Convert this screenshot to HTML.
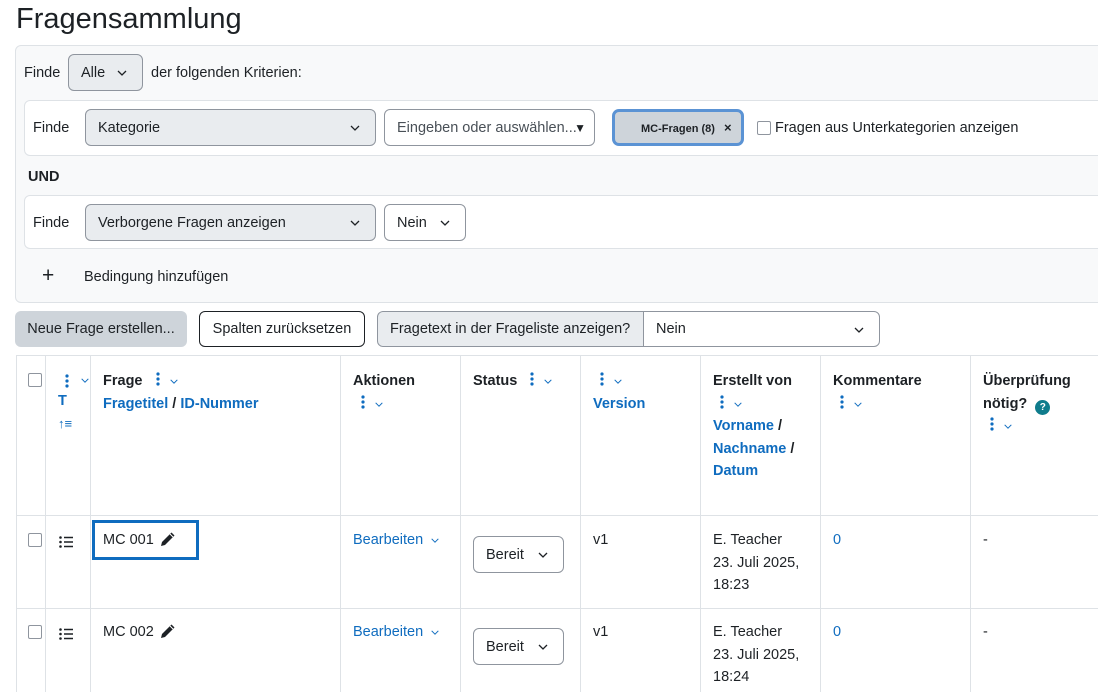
<!DOCTYPE html>
<html><head><meta charset="utf-8"><style>
*{box-sizing:border-box;margin:0;padding:0}
body{width:1098px;height:692px;overflow:hidden;background:#fff;font-family:"Liberation Sans",sans-serif;font-size:14.5px;color:#1d2125;position:relative}
.a{position:absolute}
.sel{position:absolute;border:1px solid #8f959e;border-radius:6px;background:#e9ecef;height:37px;padding:0 12px;line-height:37px}
.w{background:#fff}
.chev{position:absolute;right:14px;top:14px}
.b{font-weight:bold}
.l{color:#0f6cbf}
.vl{position:absolute;top:355px;height:337px;width:1px;background:#dee2e6}
.hl{position:absolute;left:16px;width:1082px;height:1px;background:#dee2e6}
.cb{position:absolute;width:14px;height:14px;border:1px solid #8f959e;border-radius:2px;background:#fff}
</style></head><body>
<svg width="0" height="0" style="position:absolute"><defs>
<symbol id="ch" viewBox="0 0 12 8"><path d="M2 2l4 4 4-4" fill="none" stroke="#1d2125" stroke-width="1.3"/></symbol>
<symbol id="chb" viewBox="0 0 12 8"><path d="M2 2l4 4 4-4" fill="none" stroke="#0f6cbf" stroke-width="1.2"/></symbol>
<symbol id="dt" viewBox="0 0 4 14"><circle cx="2" cy="2" r="1.6" fill="#0f6cbf"/><circle cx="2" cy="7" r="1.6" fill="#0f6cbf"/><circle cx="2" cy="12" r="1.6" fill="#0f6cbf"/></symbol>
<symbol id="pen" viewBox="0 0 16 16"><path d="M11.5 1.5l3 3L5 14l-4 1 1-4z" fill="#1d2125"/><path d="M10 3l3 3" stroke="#fff" stroke-width="1"/></symbol>
<symbol id="lst" viewBox="0 0 14 12"><circle cx="1.5" cy="1.5" r="1.3" fill="#1d2125"/><circle cx="1.5" cy="6" r="1.3" fill="#1d2125"/><circle cx="1.5" cy="10.5" r="1.3" fill="#1d2125"/><path d="M5 1.5h9M5 6h9M5 10.5h9" stroke="#1d2125" stroke-width="1.5"/></symbol>
</defs></svg>

<div class="a" style="left:16px;top:3px;font-size:29px;color:#1d2125">Fragensammlung</div>

<div class="a" style="left:15px;top:45px;width:1100px;height:258px;background:#f8f9fa;border:1px solid #dee2e6;border-radius:6px"></div>
<div class="a" style="left:24px;top:65px">Finde</div>
<div class="sel" style="left:68px;top:54px;width:75px">Alle<svg class="chev" width="12" height="8"><use href="#ch"/></svg></div>
<div class="a" style="left:151px;top:65px">der folgenden Kriterien:</div>

<div class="a" style="left:24px;top:100px;width:1090px;height:56px;background:#fff;border:1px solid #dee2e6;border-radius:6px"></div>
<div class="a" style="left:33px;top:120px">Finde</div>
<div class="sel" style="left:85px;top:109px;width:291px">Kategorie<svg class="chev" width="12" height="8"><use href="#ch"/></svg></div>
<div class="sel w" style="left:384px;top:109px;width:211px;color:#495057">Eingeben oder auswählen...<span class="a" style="right:8px;top:0;font-size:12px;color:#1d2125">▼</span></div>
<div class="a" style="left:612px;top:109px;width:132px;height:37px;border:3px solid #5b93d4;border-radius:7px;background:#ced4da;font-size:11px;font-weight:bold;line-height:31px;padding-left:26px">MC-Fragen (8) <span style="margin-left:6px;font-size:13px">×</span></div>
<div class="cb" style="left:757px;top:121px"></div>
<div class="a" style="left:775px;top:120px">Fragen aus Unterkategorien anzeigen</div>

<div class="a b" style="left:28px;top:169px">UND</div>

<div class="a" style="left:24px;top:195px;width:1090px;height:54px;background:#fff;border:1px solid #dee2e6;border-radius:6px"></div>
<div class="a" style="left:33px;top:215px">Finde</div>
<div class="sel" style="left:85px;top:204px;width:291px">Verborgene Fragen anzeigen<svg class="chev" width="12" height="8"><use href="#ch"/></svg></div>
<div class="sel w" style="left:384px;top:204px;width:82px">Nein<svg class="chev" width="12" height="8"><use href="#ch"/></svg></div>

<div class="a" style="left:42px;top:264px;font-size:21px">+</div>
<div class="a" style="left:84px;top:269px">Bedingung hinzufügen</div>

<div class="a" style="left:15px;top:311px;width:172px;height:36px;background:#ced4da;border-radius:6px;line-height:37px;text-align:center">Neue Frage erstellen...</div>
<div class="a" style="left:199px;top:311px;width:166px;height:36px;border:1px solid #1d2125;border-radius:6px;line-height:35px;text-align:center">Spalten zurücksetzen</div>
<div class="a" style="left:377px;top:311px;width:267px;height:36px;border:1px solid #8f959e;border-radius:6px 0 0 6px;background:#e9ecef;line-height:35px;padding-left:12px">Fragetext in der Frageliste anzeigen?</div>
<div class="sel w" style="left:643px;top:311px;width:237px;height:36px;border-radius:0 6px 6px 0;line-height:35px">Nein<svg class="chev" width="12" height="8"><use href="#ch"/></svg></div>

<div class="hl" style="top:355px"></div>
<div class="hl" style="top:515px"></div>
<div class="hl" style="top:608px"></div>
<div class="vl" style="left:16px"></div><div class="vl" style="left:45px"></div><div class="vl" style="left:90px"></div><div class="vl" style="left:340px"></div><div class="vl" style="left:460px"></div><div class="vl" style="left:580px"></div><div class="vl" style="left:700px"></div><div class="vl" style="left:820px"></div><div class="vl" style="left:970px"></div>

<div class="cb" style="left:28px;top:373px"></div>
<svg class="a" style="left:65px;top:374px" width="4" height="14"><use href="#dt"/></svg>
<svg class="a" style="left:80px;top:377px" width="10" height="7"><use href="#chb"/></svg>
<div class="a b l" style="left:58px;top:393px">T</div>
<div class="a b l" style="left:58px;top:416px;font-size:13px">↑≡</div>

<div class="a" style="left:103px;top:370px;line-height:22.5px"><span class="b">Frage</span><svg style="margin-left:13px;vertical-align:-1px" width="4" height="14"><use href="#dt"/></svg><svg style="margin-left:9px" width="10" height="7"><use href="#chb"/></svg><br><span class="b l">Fragetitel</span> <span class="b">/</span> <span class="b l">ID-Nummer</span></div>

<div class="a" style="left:353px;top:370px;line-height:22.5px"><span class="b">Aktionen</span><br><svg style="margin-left:8px;vertical-align:-1px" width="4" height="14"><use href="#dt"/></svg><svg style="margin-left:9px" width="10" height="7"><use href="#chb"/></svg></div>
<div class="a" style="left:473px;top:370px;line-height:22.5px"><span class="b">Status</span><svg style="margin-left:13px;vertical-align:-1px" width="4" height="14"><use href="#dt"/></svg><svg style="margin-left:9px" width="10" height="7"><use href="#chb"/></svg></div>
<div class="a" style="left:593px;top:370px;line-height:22.5px"><svg style="margin-left:7px;vertical-align:-1px" width="4" height="14"><use href="#dt"/></svg><svg style="margin-left:9px" width="10" height="7"><use href="#chb"/></svg><br><span class="b l">Version</span></div>
<div class="a" style="left:713px;top:370px;line-height:22.5px"><span class="b">Erstellt von</span><br><svg style="margin-left:7px;vertical-align:-1px" width="4" height="14"><use href="#dt"/></svg><svg style="margin-left:9px" width="10" height="7"><use href="#chb"/></svg><br><span class="b l">Vorname</span> <span class="b">/</span><br><span class="b l">Nachname</span> <span class="b">/</span><br><span class="b l">Datum</span></div>
<div class="a" style="left:833px;top:370px;line-height:22.5px"><span class="b">Kommentare</span><br><svg style="margin-left:7px;vertical-align:-1px" width="4" height="14"><use href="#dt"/></svg><svg style="margin-left:9px" width="10" height="7"><use href="#chb"/></svg></div>
<div class="a" style="left:983px;top:370px;line-height:22.5px"><span class="b">Überprüfung<br>nötig?</span> <span style="display:inline-block;width:15px;height:15px;border-radius:50%;background:#0f7c8c;color:#fff;font-size:10px;font-weight:bold;text-align:center;line-height:15px;margin-left:4px;vertical-align:-2px">?</span><br><svg style="margin-left:7px;vertical-align:-1px" width="4" height="14"><use href="#dt"/></svg><svg style="margin-left:9px" width="10" height="7"><use href="#chb"/></svg></div>

<!-- row 1 -->
<div class="cb" style="left:28px;top:533px"></div>
<svg class="a" style="left:59px;top:536px" width="14" height="12"><use href="#lst"/></svg>
<div class="a" style="left:92px;top:520px;width:107px;height:40px;border:3px solid #0f6cbf"></div>
<div class="a" style="left:103px;top:532px">MC 001</div>
<svg class="a" style="left:160px;top:531px" width="16" height="16"><use href="#pen"/></svg>
<div class="a l" style="left:353px;top:532px">Bearbeiten<svg style="margin-left:7px" width="10" height="7"><use href="#chb"/></svg></div>
<div class="sel w" style="left:473px;top:536px;width:91px">Bereit<svg class="chev" width="12" height="8"><use href="#ch"/></svg></div>
<div class="a" style="left:593px;top:532px">v1</div>
<div class="a" style="left:713px;top:529px;line-height:22.5px">E. Teacher<br>23. Juli 2025,<br>18:23</div>
<div class="a l" style="left:833px;top:532px">0</div>
<div class="a" style="left:983px;top:532px">-</div>

<!-- row 2 -->
<div class="cb" style="left:28px;top:625px"></div>
<svg class="a" style="left:59px;top:628px" width="14" height="12"><use href="#lst"/></svg>
<div class="a" style="left:103px;top:624px">MC 002</div>
<svg class="a" style="left:160px;top:623px" width="16" height="16"><use href="#pen"/></svg>
<div class="a l" style="left:353px;top:624px">Bearbeiten<svg style="margin-left:7px" width="10" height="7"><use href="#chb"/></svg></div>
<div class="sel w" style="left:473px;top:628px;width:91px">Bereit<svg class="chev" width="12" height="8"><use href="#ch"/></svg></div>
<div class="a" style="left:593px;top:624px">v1</div>
<div class="a" style="left:713px;top:621px;line-height:22.5px">E. Teacher<br>23. Juli 2025,<br>18:24</div>
<div class="a l" style="left:833px;top:624px">0</div>
<div class="a" style="left:983px;top:624px">-</div>
</body></html>
